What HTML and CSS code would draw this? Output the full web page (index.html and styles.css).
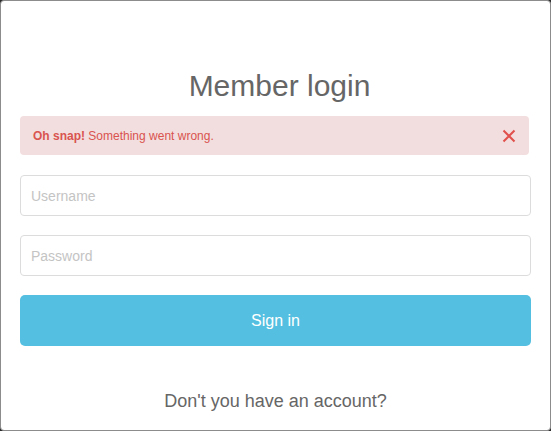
FILE: index.html
```html
<!DOCTYPE html>
<html>
<head>
<meta charset="utf-8">
<link rel="stylesheet" href="styles.css">
</head>
<body>
<div class="modal">
  <h1 class="title">Member login</h1>
  <div class="alert">
    <span class="alert-text"><strong>Oh snap!</strong> Something went wrong.</span>
    <svg class="alert-close" width="14" height="14" viewBox="0 0 14 14"><path d="M1.5 1.5 L12.5 12.5 M12.5 1.5 L1.5 12.5" stroke="#e0504c" stroke-width="2" fill="none"/></svg>
  </div>
  <form class="form">
    <input class="field" type="text" placeholder="Username">
    <input class="field" type="password" placeholder="Password">
    <button class="btn" type="button">Sign in</button>
  </form>
  <p class="footer">Don't you have an account?</p>
</div>
</body>
</html>
```

FILE: styles.css
```css
html, body {
  margin: 0;
  padding: 0;
  background: #2a2a2a;
}
body {
  font-family: "Liberation Sans", Arial, sans-serif;
}
.modal {
  box-sizing: border-box;
  width: 551px;
  height: 431px;
  background: #fff;
  border: 1px solid #8c8c8c;
  border-radius: 4px;
  padding: 0 19px;
  overflow: hidden;
}
.title {
  margin: 66px 0 0 0;
  padding-left: 8px;
  font-size: 30px;
  font-weight: normal;
  color: #666;
  text-align: center;
  line-height: 38px;
}
.alert {
  box-sizing: border-box;
  margin-top: 11px;
  width: 509px;
  height: 39px;
  background: #f2dede;
  border-radius: 4px;
  display: flex;
  align-items: center;
  justify-content: space-between;
  padding: 0 13px 0 13px;
  color: #d9534f;
  font-size: 12px;
}
.alert strong {
  font-weight: bold;
}
.alert-close {
  display: block;
}
.form {
  display: flex;
  flex-direction: column;
  gap: 20px;
  margin-top: 20px;
}
.field {
  box-sizing: border-box;
  height: 41px;
  width: 100%;
  margin: 0;
  border: 1px solid #dcdcdc;
  border-radius: 4px;
  padding: 0 10px;
  font-family: "Liberation Sans", Arial, sans-serif;
  font-size: 14px;
  color: #555;
  background: #fff;
}
.form .field + .field {
  margin-top: -1px;
}
.field::placeholder {
  color: #c4c4c4;
}
.btn {
  height: 51px;
  width: 100%;
  margin-top: -1px;
  border: none;
  border-radius: 5px;
  background: #54bfe0;
  color: #fff;
  font-family: "Liberation Sans", Arial, sans-serif;
  font-size: 16px;
  cursor: pointer;
}
.footer {
  margin: 45px 0 0 0;
  text-align: center;
  font-size: 18px;
  color: #666;
}
```
